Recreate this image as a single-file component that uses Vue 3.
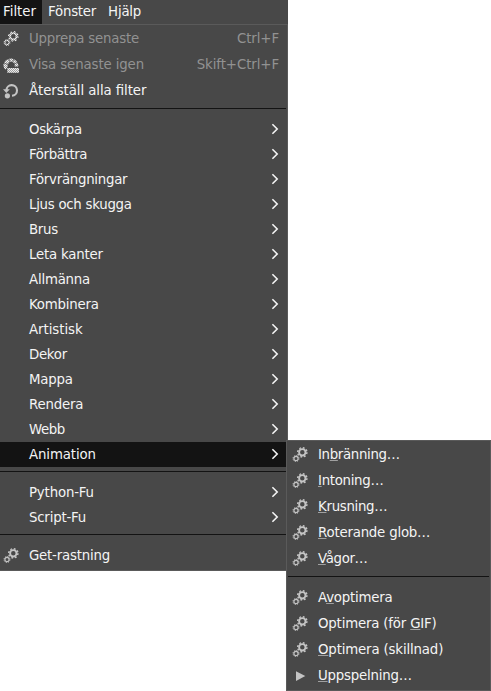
<script setup>
const recent = [
  { icon: 'gears', label: 'Upprepa senaste', key: 'Ctrl+F', disabled: true },
  { icon: 'reshow', label: 'Visa senaste igen', key: 'Skift+Ctrl+F', disabled: true },
  { icon: 'reset', label: 'Återställ alla filter' },
]
const groups = [
  'Oskärpa', 'Förbättra', 'Förvrängningar', 'Ljus och skugga', 'Brus', 'Leta kanter', 'Allmänna',
  'Kombinera', 'Artistisk', 'Dekor', 'Mappa', 'Rendera', 'Webb', 'Animation',
]
const scripts = ['Python-Fu', 'Script-Fu']
// Each label is split around its mnemonic letter.
const animation = [
  ['In', 'b', 'ränning…'], ['', 'I', 'ntoning…'], ['', 'K', 'rusning…'],
  ['', 'R', 'oterande glob…'], ['', 'V', 'ågor…'],
]
const playback = [
  ['A', 'v', 'optimera', 'gears'], ['Optimera (för ', 'G', 'IF)', 'gears'],
  ['', 'O', 'ptimera (skillnad)', 'gears'], ['', 'U', 'ppspelning…', 'play'],
]
// Labels whose tracking differs from the menu's default, in px.
const tracking = {
  'Visa senaste igen': -0.12, 'Återställ alla filter': -0.08,
  'Oskärpa': -0.35, 'Förbättra': -0.38, 'Förvrängningar': -0.26, 'Ljus och skugga': -0.27,
  'Brus': -0.3, 'Artistisk': -0.05, 'Dekor': -0.3, 'Webb': -0.45, 'Animation': -0.12,
  'Python-Fu': -0.17, 'ränning…': -0.33, 'ntoning…': -0.3, 'rusning…': -0.3,
  'ågor…': -0.35, 'IF)': -0.18, 'ptimera (skillnad)': -0.16,
}
const track = (name) => ({ letterSpacing: (tracking[name] ?? -0.21) + 'px' })
</script>

<template>
  <div class="screen">
    <svg class="defs" width="0" height="0">
      <defs>
        <symbol id="gears" viewBox="0 0 16 16">
          <g fill="none" stroke="currentColor">
            <circle cx="10.3" cy="5.3" r="3.2" stroke-width="1.9" />
            <circle cx="10.3" cy="5.3" r="4.6" stroke-width="1.5" stroke-dasharray="1.8 1.81" />
            <circle cx="4" cy="11.5" r="2.1" stroke-width="1.2" />
            <circle cx="4" cy="11.5" r="3" stroke-width="1" stroke-dasharray="1.2 1.156" />
          </g>
        </symbol>
        <symbol id="reshow" viewBox="0 0 16 16">
          <path d="M2.6 12.8A7.6 7.6 0 0 1 .3 8A7.6 7.6 0 0 1 15.4 8.6L15 9.5H11.5A3.4 3.4 0 0 0 5 7.2L4.6 9.6Z" fill="currentColor" />
          <path d="M4.5 .6l2.6 4M11.8 .6L9.6 4.6M.2 5.8l4.8 1.7M15.6 5.2l-4.4 1.6" stroke="#484848" stroke-width=".7" />
          <path d="M4.3 11H16v4.8H4.3z" fill="currentColor" />
        </symbol>
        <symbol id="reset" viewBox="0 0 16 16">
          <path d="M3.4 7.4A5.3 5.3 0 1 1 9 12.7" fill="none" stroke="currentColor" stroke-width="2.1" />
          <path d="M0 6.2H6.8L3.3 9.9Z" fill="currentColor" />
          <circle cx="4.4" cy="12.8" r="2.6" fill="currentColor" />
        </symbol>
        <symbol id="play" viewBox="0 0 16 16">
          <path d="M4 3.2L13.3 8L4 12.9Z" fill="currentColor" />
        </symbol>
      </defs>
    </svg>

    <nav class="menubar">
      <span class="top open">Filter</span>
      <span class="top">Fönster</span>
      <span class="top">Hjälp</span>
    </nav>

    <div class="menu">
      <div v-for="r in recent" :key="r.label" class="item tall" :class="{ disabled: r.disabled }">
        <svg class="icon"><use :href="'#' + r.icon" /></svg>
        <span class="label" :style="track(r.label)">{{ r.label }}</span>
        <span class="key">{{ r.key }}</span>
      </div>
      <div class="sep"></div>
      <div v-for="g in groups" :key="g" class="item" :class="{ active: g === 'Animation' }">
        <span class="icon"></span>
        <span class="label" :style="track(g)">{{ g }}</span>
        <svg class="arrow" viewBox="0 0 8 12"><path d="M1.4 1.2L6.2 6L1.4 10.8" /></svg>
      </div>
      <div class="sep"></div>
      <div v-for="s in scripts" :key="s" class="item">
        <span class="icon"></span>
        <span class="label" :style="track(s)">{{ s }}</span>
        <svg class="arrow" viewBox="0 0 8 12"><path d="M1.4 1.2L6.2 6L1.4 10.8" /></svg>
      </div>
      <div class="sep"></div>
      <div class="item tall">
        <svg class="icon"><use href="#gears" /></svg>
        <span class="label" :style="track('Get-rastning')">Get-rastning</span>
      </div>
    </div>

    <div class="submenu">
      <div v-for="a in animation" :key="a[2]" class="item tall">
        <svg class="icon"><use href="#gears" /></svg>
        <span class="label" :style="track(a[2])">{{ a[0] }}<u>{{ a[1] }}</u>{{ a[2] }}</span>
      </div>
      <div class="sep"></div>
      <div v-for="p in playback" :key="p[2]" class="item tall">
        <svg class="icon"><use :href="'#' + p[3]" /></svg>
        <span class="label" :style="track(p[2])">{{ p[0] }}<u>{{ p[1] }}</u>{{ p[2] }}</span>
      </div>
    </div>
  </div>
</template>

<style>
body { background: #fff; }
</style>

<style scoped>
.screen {
  position: relative;
  width: 491px;
  height: 691px;
  overflow: hidden;
  background: #fff;
  color: #f4f4f4;
  font: 13.333px/16px "DejaVu Sans", sans-serif;
  font-feature-settings: "liga" 1;
}
.defs { position: absolute; }
.menubar {
  display: flex;
  width: 288px;
  height: 24px;
  background: #484848;
  letter-spacing: -0.22px;
}
.top { padding: 4px 6px 0; height: 20px; }
.open {
  box-sizing: border-box;
  width: 42px;
  height: 24px;
  padding-left: 3px;
  background: #131313;
  letter-spacing: 0;
}
.menu, .submenu {
  box-sizing: border-box;
  background: #484848;
  border: 1px solid #5a5a5a;
  padding: 1px 0;
}
.menu { width: 288px; border-left: 0; }
.submenu {
  position: absolute;
  left: 286px;
  top: 440px;
  width: 205px;
}
.item {
  display: flex;
  align-items: center;
  height: 25px;
  padding-left: 3px;
  padding-right: 8px;
}
.submenu .item { padding-left: 5px; }
.tall { height: 26px; }
.active { background: #131313; }
.icon {
  width: 16px;
  height: 16px;
  margin-right: 10px;
  flex: none;
  color: #c4c4c4;
}
.label { flex: 1; white-space: pre; }
.key { letter-spacing: -0.08px; }
.disabled { color: #929292; }
.disabled .icon {
  color: #eee;
  mask-image: conic-gradient(#000 25%, #0008 0 50%, #000 0 75%, #0008 0);
  mask-size: 2px 2px;
}
.arrow {
  width: 8px;
  height: 12px;
  margin-bottom: 1px;
  fill: none;
  stroke: #f4f4f4;
  stroke-width: 1.6;
}
.sep {
  height: 1px;
  margin: 4px 1px 8px 0;
  background: #131313;
}
.submenu .sep { margin-left: 1px; }
u {
  text-decoration: underline 1px #a0a0a0;
  text-underline-offset: 1px;
  text-decoration-skip-ink: none;
}
</style>
